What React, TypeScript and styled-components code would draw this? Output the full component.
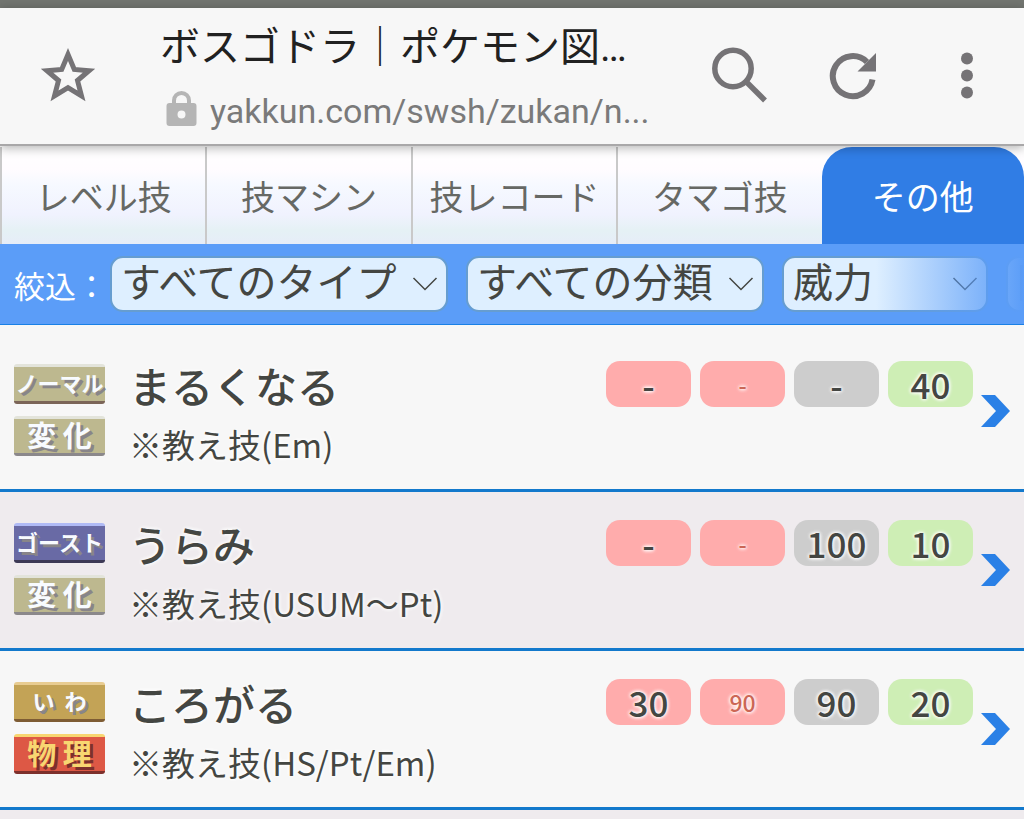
import React from "react";
import styled, { createGlobalStyle } from "styled-components";

const GlobalStyle = createGlobalStyle`
  *, *::before, *::after { box-sizing: border-box; }
  body {
    margin: 0;
    background: #f7f7f7;
    color: #444642;
    font-family: "Noto Sans CJK JP", "Noto Sans", sans-serif;
  }
  button, select { font: inherit; color: inherit; }
  h1, h2, p, ul { margin: 0; padding: 0; }
`;

const Screen = styled.main`
  height: 100vh;
  overflow: hidden;
`;

const StatusBar = styled.div`
  height: 8px;
  background: #727570;
`;

const BrowserBar = styled.header`
  position: relative;
  z-index: 2;
  display: flex;
  align-items: center;
  height: 138px;
  padding-left: 28px;
  background: #f7f7f7;
  border-bottom: 2px solid #a9a8a9;
  box-shadow: 0 2px 10px rgba(0, 0, 0, 0.3);
`;

const IconButton = styled.button<{ $width: number }>`
  display: flex;
  flex: none;
  align-items: center;
  justify-content: center;
  width: ${(p) => p.$width}px;
  height: 80px;
  padding: 0;
  border: 0;
  background: none;
  color: #757376;
`;

const Address = styled.div`
  flex: 1;
  min-width: 0;
  padding: 4px 0 0 52px;
  white-space: nowrap;
`;

const PageTitle = styled.h1`
  color: #212121;
  font-family: Roboto, "Noto Sans CJK JP", sans-serif;
  font-size: 40px;
  font-weight: 400;
  line-height: 66px;
`;

const PageUrl = styled.p`
  display: flex;
  align-items: center;
  gap: 13px;
  padding-left: 6px;
  color: #7a7a7a;
  font-family: Roboto, sans-serif;
  font-size: 34px;
  line-height: 60px;

  svg {
    margin-bottom: 4px;
  }
`;

const Tabs = styled.nav`
  display: grid;
  grid-template-columns: repeat(4, 206fr) 203fr;
  height: 98px;
  padding-top: 1px;
  background: linear-gradient(#ffffff, #fffcff 24%, #f6f9ff 40%, #f0f2fe 70%, #e5f1f5 86%, #e6edf8);
`;

const Tab = styled.button<{ $active?: boolean }>`
  padding: 0;
  border: 0;
  border-left: ${(p) => (p.$active ? "0" : "2px solid #c9c9c9")};
  border-radius: ${(p) => (p.$active ? "30px 30px 0 0" : "0")};
  background: ${(p) => (p.$active ? "#307de5" : "transparent")};
  color: ${(p) => (p.$active ? "#fff" : "#666864")};
  font-size: 34px;
  white-space: nowrap;
`;

const FilterBar = styled.form`
  position: relative;
  display: flex;
  align-items: center;
  gap: 18px;
  height: 81px;
  padding-left: 14px;
  overflow: hidden;
  background: #5b9df8;
  border-bottom: 1px solid #1a80e6;

  &::after {
    content: "";
    position: absolute;
    inset: 0 0 0 auto;
    width: 148px;
    background: linear-gradient(to right, rgba(91, 157, 248, 0), #5b9df8);
    pointer-events: none;
  }
`;

const FilterTitle = styled.span`
  flex: none;
  width: 78px;
  color: #fff;
  font-size: 31px;
  white-space: nowrap;
`;

const SelectBox = styled.label<{ $width: number }>`
  position: relative;
  flex: none;
  width: ${(p) => p.$width}px;

  svg {
    position: absolute;
    right: 10px;
    top: 20px;
    pointer-events: none;
  }
`;

const Select = styled.select`
  appearance: none;
  display: block;
  width: 100%;
  height: 56px;
  padding: 0 0 8px 9px;
  border: 2px solid #669dd0;
  border-radius: 13px;
  background: #deefff;
  color: #444642;
  font-size: 40px;
  line-height: 44px;
`;

const MoveList = styled.ul`
  padding-top: 8px;
  list-style: none;
`;

const MoveRow = styled.li`
  border-bottom: 3px solid #1379cc;

  &:nth-child(even) {
    background: #efebee;
  }
`;

const MoveLink = styled.a`
  display: flex;
  align-items: center;
  height: 156px;
  padding: 0 14px;
  color: inherit;
  text-decoration: none;
`;

const Badges = styled.div`
  display: grid;
  gap: 12px;
  width: 91px;
  padding-bottom: 2px;
`;

interface Tone {
  fill: string;
  top: string;
  bottom: string;
  ink: string;
  shade: string;
}

const Badge = styled.span<{ $tone: Tone; $size: number }>`
  display: flex;
  align-items: center;
  justify-content: center;
  height: 40px;
  padding-bottom: 4px;
  border-top: 3px solid ${(p) => p.$tone.top};
  border-bottom: 3px solid ${(p) => p.$tone.bottom};
  border-radius: 3px;
  background: ${(p) => p.$tone.fill};
  color: ${(p) => p.$tone.ink};
  font-size: ${(p) => p.$size}px;
  font-weight: 700;
  line-height: 30px;
  text-shadow: 3px 3px 0 ${(p) => p.$tone.shade};
  white-space: pre;
`;

const MoveText = styled.div`
  flex: 1;
  min-width: 0;
  padding: 4px 0 0 24px;
  text-shadow: 0 0 4px #fff, 0 0 4px #fff;
  white-space: nowrap;
`;

const MoveName = styled.h2`
  font-size: 42px;
  font-weight: 500;
  line-height: 62px;
`;

const MoveNote = styled.p`
  font-size: 33px;
  line-height: 56px;
`;

const Stats = styled.div`
  display: flex;
  align-self: flex-start;
  gap: 9px;
  padding: 28px 8px 0 0;
`;

const Stat = styled.span<{ $fill: string; $minor?: boolean }>`
  display: flex;
  align-items: center;
  justify-content: center;
  width: 85px;
  height: 46px;
  border-radius: 14px;
  background: ${(p) => p.$fill};
  color: ${(p) => (p.$minor ? "#cc6655" : "#444642")};
  font-size: ${(p) => (p.$minor ? 23 : 35)}px;
  font-weight: 500;
  line-height: 46px;
  text-shadow: 0 0 4px #fff, 0 0 4px #fff, 0 0 3px #fff;
`;

const tones = {
  normal: { fill: "#bdb88f", top: "#e3e4db", bottom: "#7b6558", ink: "#f8fbff", shade: "#888589" },
  status: { fill: "#bdb88f", top: "#e3e4db", bottom: "#8b888b", ink: "#f8fbff", shade: "#888589" },
  ghost: { fill: "#696aa5", top: "#b0baf5", bottom: "#3c3955", ink: "#f8fbff", shade: "#888589" },
  rock: { fill: "#c3a356", top: "#e8cc91", bottom: "#7e5c34", ink: "#f8fbff", shade: "#888589" },
  physical: { fill: "#dd5845", top: "#f8d671", bottom: "#7d302c", ink: "#f8d671", shade: "#7d302c" },
};

interface Move {
  name: string;
  note: string;
  type: string;
  typeTone: Tone;
  kind: string;
  kindTone: Tone;
  stats: [string, string, string, string];
}

const moves: Move[] = [
  { name: "まるくなる", note: "※教え技(Em)", type: "ノーマル", typeTone: tones.normal, kind: "変 化", kindTone: tones.status, stats: ["-", "-", "-", "40"] },
  { name: "うらみ", note: "※教え技(USUM～Pt)", type: "ゴースト", typeTone: tones.ghost, kind: "変 化", kindTone: tones.status, stats: ["-", "-", "100", "10"] },
  { name: "ころがる", note: "※教え技(HS/Pt/Em)", type: "い  わ", typeTone: tones.rock, kind: "物 理", kindTone: tones.physical, stats: ["30", "90", "90", "20"] },
];

const statFills = ["#ffacac", "#ffacac", "#cdcdcd", "#ceeeb5"];
const tabs = ["レベル技", "技マシン", "技レコード", "タマゴ技", "その他"];
const filters = [
  { label: "タイプ", value: "すべてのタイプ", width: 338 },
  { label: "分類", value: "すべての分類", width: 298 },
  { label: "並び替え", value: "威力", width: 206 },
  { label: "並び順", value: "降順", width: 206 },
];

const StarIcon = () => (
  <svg width="56" height="56" viewBox="0 0 56 56" fill="none" stroke="currentColor" strokeWidth="5" aria-hidden="true">
    <path d="M28 6.500 L34.300 21.500 L49 22.700 L37.500 32.500 L41.500 48 L28 39.700 L14.500 48 L18.500 32.500 L7 22.700 L21.700 21.500 Z" strokeMiterlimit="10" />
  </svg>
);

const LockIcon = () => (
  <svg width="31" height="36" viewBox="0 0 31 36" aria-hidden="true">
    <path d="M8 14 V9.500 a7.500 7.500 0 0 1 15 0 V14" fill="none" stroke="#b5b5b5" strokeWidth="4" />
    <path fillRule="evenodd" fill="#b5b5b5" d="M3.500 12 H27.500 a3 3 0 0 1 3 3 V32 a3 3 0 0 1 -3 3 H3.500 a3 3 0 0 1 -3 -3 V15 a3 3 0 0 1 3 -3 Z M15.500 19.500 a4 4 0 1 0 0 8 a4 4 0 1 0 0 -8 Z" />
  </svg>
);

const SearchIcon = () => (
  <svg width="56" height="58" viewBox="0 0 56 58" fill="none" stroke="currentColor" aria-hidden="true">
    <circle cx="22" cy="21.500" r="18.200" strokeWidth="5.500" />
    <path d="M35 34.500 L54 53.500" strokeWidth="5.500" />
  </svg>
);

const ReloadIcon = () => (
  <svg width="48" height="48" viewBox="0 0 48 48" aria-hidden="true">
    <path d="M43.500 27.500 A20 20 0 1 1 38 10" fill="none" stroke="currentColor" strokeWidth="6" />
    <path d="M47 1 V19.500 H28.500 Z" fill="currentColor" />
  </svg>
);

const MenuIcon = () => (
  <svg width="14" height="48" viewBox="0 0 14 48" fill="currentColor" aria-hidden="true">
    <circle cx="7" cy="6.500" r="6" />
    <circle cx="7" cy="23.500" r="6" />
    <circle cx="7" cy="40.500" r="6" />
  </svg>
);

const Chevron = () => (
  <svg width="26" height="16" viewBox="0 0 26 16" fill="none" stroke="#444642" strokeWidth="1.500" aria-hidden="true">
    <path d="M1.500 2 L13 13.500 L24.500 2" />
  </svg>
);

const Arrow = () => (
  <svg width="29" height="32" viewBox="0 0 29 32" aria-hidden="true">
    <path d="M0 0 H14 L29 16 L14 32 H0 L15 16 Z" fill="#2a80e6" />
  </svg>
);

export default function App() {
  return (
    <Screen>
      <GlobalStyle />
      <StatusBar />
      <BrowserBar>
        <IconButton $width={80} aria-label="ブックマーク"><StarIcon /></IconButton>
        <Address>
          <PageTitle>ボスゴドラ｜ポケモン図…</PageTitle>
          <PageUrl><LockIcon />yakkun.com/swsh/zukan/n...</PageUrl>
        </Address>
        <IconButton $width={114} aria-label="検索"><SearchIcon /></IconButton>
        <IconButton $width={114} aria-label="再読み込み"><ReloadIcon /></IconButton>
        <IconButton $width={114} aria-label="メニュー"><MenuIcon /></IconButton>
      </BrowserBar>
      <Tabs>
        {tabs.map((name) => (
          <Tab key={name} type="button" $active={name === "その他"}>{name}</Tab>
        ))}
      </Tabs>
      <FilterBar>
        <FilterTitle>絞込：</FilterTitle>
        {filters.map((f) => (
          <SelectBox key={f.label} $width={f.width}>
            <Select aria-label={f.label}><option>{f.value}</option></Select>
            <Chevron />
          </SelectBox>
        ))}
      </FilterBar>
      <MoveList>
        {moves.map((m) => (
          <MoveRow key={m.name}>
            <MoveLink href="#">
              <Badges>
                <Badge $tone={m.typeTone} $size={22}>{m.type}</Badge>
                <Badge $tone={m.kindTone} $size={29}>{m.kind}</Badge>
              </Badges>
              <MoveText>
                <MoveName>{m.name}</MoveName>
                <MoveNote>{m.note}</MoveNote>
              </MoveText>
              <Stats>
                {m.stats.map((value, i) => (
                  <Stat key={i} $fill={statFills[i]} $minor={i === 1}>{value}</Stat>
                ))}
              </Stats>
              <Arrow />
            </MoveLink>
          </MoveRow>
        ))}
        <MoveRow><MoveLink href="#" aria-label="次の技" /></MoveRow>
      </MoveList>
    </Screen>
  );
}
